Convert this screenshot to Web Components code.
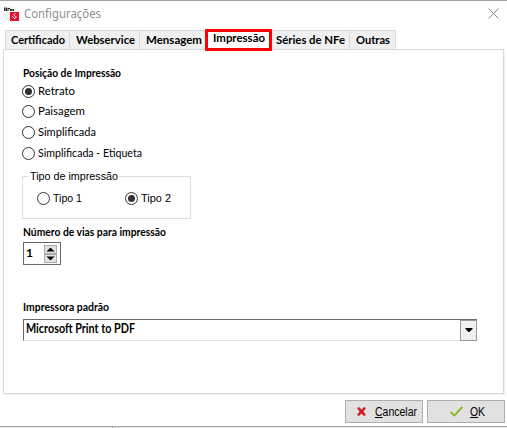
<!DOCTYPE html>
<html lang="pt-BR">
<head>
<meta charset="utf-8">
<title>Configurações</title>
<style>
html,body{margin:0;padding:0;width:507px;height:428px;overflow:hidden;background:#fff}
</style>
</head>
<body>
<config-window></config-window>
<script>
// Text label condensed or widened so that it fills the "w" width.
class FitLabel extends HTMLElement{
  constructor(){super();this.attachShadow({mode:'open'}).innerHTML='<style>:host{display:inline-block;white-space:pre;line-height:16px;height:16px;width:var(--w)}span{display:inline-block;transform-origin:0 50%}</style><span><slot></slot></span>';}
  connectedCallback(){
    const w=+this.getAttribute('w'),s=this.shadowRoot.querySelector('span');
    this.style.setProperty('--w',w+'px');
    const cur=s.getBoundingClientRect().width;
    if(cur)s.style.transform='scaleX('+(w/cur).toFixed(4)+')';
  }
}
class UiRadio extends HTMLElement{
  constructor(){super();this.attachShadow({mode:'open'}).innerHTML=`<style>:host{display:flex;align-items:center;gap:3px;height:16px}
i{width:13px;height:13px;box-sizing:border-box;border:1px solid #333;border-radius:50%;background:#fff;display:grid;place-items:center;flex:none}
:host([checked]) i::after{content:"";width:7px;height:7px;border-radius:50%;background:#333}</style><i></i><slot></slot>`;}
}
class UiTab extends HTMLElement{
  constructor(){super();this.attachShadow({mode:'open'}).innerHTML=`<style>:host{display:block;box-sizing:border-box;height:19px;width:var(--tw);border:1px solid #d9d9d9;border-left-width:var(--bl,0px);border-bottom:0;background:#f0f0f0;padding:1px 0 0 var(--pl,6px)}
:host([active]){height:22px;background:#fff;border:3px solid #f00;border-radius:1px;padding:0 0 0 5px;margin:0 0 -2px -1px;position:relative;z-index:1}
:host([active]) slot{display:block;margin-top:-2px}</style><slot></slot>`;}
}
class GroupBox extends HTMLElement{
  constructor(){super();this.attachShadow({mode:'open'}).innerHTML=`<style>:host{display:block;box-sizing:border-box;width:169px;height:43px;border:1px solid #dcdcdc}
.l{display:block;width:max-content;margin:-9px 0 0 5px;padding:0 1px 0 2px;background:#fff;height:16px}
.r{display:flex;padding:6px 0 0 14px}</style><span class="l"><slot name="legend"></slot></span><div class="r"><slot></slot></div>`;}
}
class UiSpinner extends HTMLElement{
  constructor(){super();this.attachShadow({mode:'open'}).innerHTML=`<style>:host{display:flex;justify-content:space-between;box-sizing:border-box;width:38px;height:23px;border:1px solid #696969;padding:1px 3px 1px 2px}
.v{line-height:18px;font-weight:700}.b{display:grid;grid-template-rows:9px 9px;padding-top:1px}
.b span{width:13px;height:9px;box-sizing:border-box;border:1px solid #adadad;background:#e1e1e1;display:grid;place-items:center}svg{display:block}</style>
<span class="v"><slot></slot></span><div class="b"><span><svg width="9" height="5"><path d="M.5 4.5L4 1H5L8.5 4.5Z"/></svg></span><span><svg width="9" height="5"><path d="M.5 .5L4 4H5L8.5 .5Z"/></svg></span></div>`;}
}
class UiCombo extends HTMLElement{
  constructor(){super();this.attachShadow({mode:'open'}).innerHTML=`<style>:host{display:flex;justify-content:space-between;box-sizing:border-box;width:454px;height:22px;border:1px solid #696969;border-right:0;border-bottom-color:#e3e3e3;padding-left:2px}
.t{padding-top:1px}.b{width:17px;height:21px;margin-bottom:-1px;box-sizing:border-box;border:1px solid #999;background:#f0f0f0;display:grid;place-items:center}</style>
<span class="t"><slot></slot></span><span class="b"><svg width="8" height="5"><path d="M.5 0H7.5V1L4.5 4H3.5L.5 1Z"/></svg></span>`;}
}
class UiButton extends HTMLElement{
  constructor(){super();this.attachShadow({mode:'open'}).innerHTML=`<style>:host{display:flex;align-items:center;box-sizing:border-box;width:78px;height:23px;border:1px solid #adadad;background:#e1e1e1;font:12.5px/16px "Liberation Sans",sans-serif}
::slotted(svg){flex:none}</style><slot name="icon"></slot><slot></slot>`;}
}
class ConfigWindow extends HTMLElement{
  constructor(){super();this.attachShadow({mode:'open'}).innerHTML=`<style>
:host{display:flex;flex-direction:column;box-sizing:border-box;width:507px;height:428px;background:#fff;border-top:1px solid #a3a3a3;color:#000;font:11px/16px Lato,sans-serif}
.bar{display:flex;align-items:center;height:24px;padding:0 8px 3px 4px}
.bar fit-label{color:#8f8f8f;font:13px/16px "Noto Sans",sans-serif;margin:0 0 1px 5px}
.bar .x{margin:0 0 0 auto}
.tabs{display:flex;align-items:flex-end;height:21px;padding-left:5px;font-size:12px;font-weight:700}
.panel{box-sizing:border-box;width:501px;height:345px;margin-left:3px;border:1px solid #d9d9d9;box-shadow:1px 1px #f0f0f0;padding:15px 0 0 18px;display:flex;flex-direction:column;align-items:flex-start}
b fit-label,b{font-weight:700;display:block}b{padding-left:1px;height:16px}
.rs{display:grid;grid-template-rows:20px 21px 21px 20px;margin-top:2px;font-size:10.5px}
group-box{margin-top:11px;font:11px/16px "Liberation Sans",sans-serif}
ui-spinner{margin:2px 0 0 1px;font-size:12px}
ui-combo{margin:4px 0 0 1px;font-size:12.5px;font-weight:700}
.foot{display:flex;gap:4px;justify-content:flex-end;padding:6px 2px 3px 0}
u{text-underline-offset:1px;text-decoration-thickness:1px}
.edge{height:1px;border-top:1px solid #a3a3a3;background:linear-gradient(90deg,#e5e5e5 112px,#b5b5b5 112px 113px,#e5e5e5 113px)}
</style>
<div class="bar"><svg width="15" height="17" viewBox="0 0 15 17"><path d="M0 1H9L12 4V15H0Z" fill="#f3f3f3"/><path d="M0 2.5H1.5V6H0ZM2 2.5H3V6H2ZM3.5 3H6V4H4.5V6H3.5ZM6 4H8V6H6ZM8.5 4H10V6H8.5Z" fill="#222"/><rect x="6" y="7" width="9" height="9" fill="#df1230"/><path d="M11.5 8L9.5 10L12.5 12L10 14M8 11L11 14" stroke="#fff" stroke-width=".8" fill="none"/></svg>
<fit-label w="77">Configurações</fit-label>
<svg class="x" width="11" height="11"><path d="M.5 .5L10.5 10.5M10.5 .5L.5 10.5" stroke="#858585" fill="none"/></svg></div>
<div class="tabs">
<ui-tab style="--tw:65px;--bl:1px;--pl:5px"><fit-label w="54">Certificado</fit-label></ui-tab>
<ui-tab style="--tw:70px"><fit-label w="59">Webservice</fit-label></ui-tab>
<ui-tab style="--tw:66px"><fit-label w="56">Mensagem</fit-label></ui-tab>
<ui-tab active style="--tw:67px"><fit-label w="52">Impressão</fit-label></ui-tab>
<ui-tab style="--tw:78px;--pl:4px"><fit-label w="69">Séries de NFe</fit-label></ui-tab>
<ui-tab style="--tw:46px"><fit-label w="34">Outras</fit-label></ui-tab>
</div>
<div class="panel">
<b><fit-label w="98">Posição de Impressão</fit-label></b>
<div class="rs">
<ui-radio checked><fit-label w="37">Retrato</fit-label></ui-radio>
<ui-radio><fit-label w="47">Paisagem</fit-label></ui-radio>
<ui-radio><fit-label w="58">Simplificada</fit-label></ui-radio>
<ui-radio><fit-label w="104">Simplificada - Etiqueta</fit-label></ui-radio>
</div>
<group-box><fit-label slot="legend" w="88">Tipo de impressão</fit-label>
<ui-radio style="width:88px"><fit-label w="29">Tipo 1</fit-label></ui-radio><ui-radio checked><fit-label w="30">Tipo 2</fit-label></ui-radio></group-box>
<b style="margin-top:5px"><fit-label w="143">Número de vias para impressão</fit-label></b>
<ui-spinner>1</ui-spinner>
<b style="margin-top:34px"><fit-label w="86">Impressora padrão</fit-label></b>
<ui-combo><fit-label w="109">Microsoft Print to PDF</fit-label></ui-combo>
</div>
<div class="foot">
<ui-button><svg slot="icon" style="margin:0 9px 0 11px" width="9" height="9"><path d="M0 1L2 0L4.5 2.5L7 0L9 1L6.5 4.5L9 8L7 9L4.5 6.5L2 9L0 8L2.5 4.5Z" fill="#cf2027"/></svg><fit-label w="42"><u>C</u>ancelar</fit-label></ui-button>
<ui-button><svg slot="icon" style="margin:0 7px 0 22px" width="13" height="11"><path d="M.7 6L4.3 9.5L12.3 .8" stroke="#84b818" stroke-width="1.8" fill="none"/></svg><fit-label w="15"><u>O</u>K</fit-label></ui-button>
</div>
<div class="edge"></div>`;}
}
customElements.define('fit-label',FitLabel);
customElements.define('ui-radio',UiRadio);
customElements.define('ui-tab',UiTab);
customElements.define('group-box',GroupBox);
customElements.define('ui-spinner',UiSpinner);
customElements.define('ui-combo',UiCombo);
customElements.define('ui-button',UiButton);
customElements.define('config-window',ConfigWindow);
</script>
</body>
</html>
